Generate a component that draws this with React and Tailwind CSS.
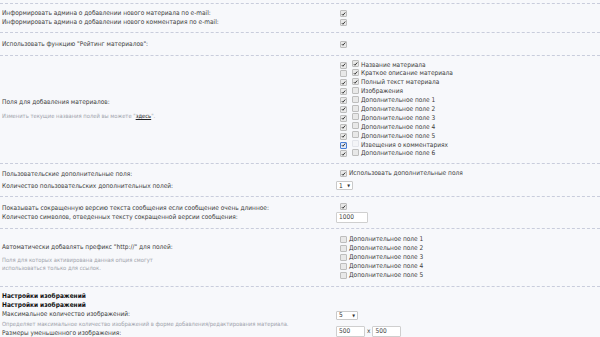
import React from 'react';

const Check = ({ checked = false, focus = false, faint = false }) => (
  <span
    className={`inline-flex h-[7px] w-[7px] shrink-0 items-center justify-center rounded-[1px] border ${
      focus
        ? 'border-[#4a7fd6] bg-[#dfe8f7]'
        : faint
        ? 'border-[#e2e4ea] bg-[#f3f4f7]'
        : 'border-[#bdbdbd] bg-[#e8e8e8]'
    }`}
  >
    {checked && (
      <svg viewBox="0 0 8 8" className="h-[6px] w-[6px]">
        <path d="M1.3 4.2 L3.1 6 L6.8 1.6" fill="none" stroke="#2b2b2b" strokeWidth="1.5" />
      </svg>
    )}
  </span>
);

const Select = ({ value, w }) => (
  <span className={`inline-flex h-[9px] ${w} items-center justify-between rounded-[1px] border border-[#c9c9c9] bg-white px-[2px] text-[6.5px] leading-none text-[#333]`}>
    {value}
    <span className="text-[4px]">▼</span>
  </span>
);

const Field = ({ value, w }) => (
  <span className={`inline-flex h-[11px] ${w} items-center rounded-[1px] border border-[#cfcfcf] bg-white px-[2px] text-[6.5px] leading-none text-[#444]`}>
    {value}
  </span>
);

const Row = ({ h, left, right }) => (
  <div className={`flex ${h} border-b border-dashed border-[#c9cddc]`}>
    <div className="flex w-[336px] flex-col justify-center pl-[2px]">{left}</div>
    <div className="flex flex-col justify-center">{right}</div>
  </div>
);

const fields = [
  [true, true, 'Название материала'],
  [false, true, 'Краткое описание материала'],
  [true, true, 'Полный текст материала'],
  [true, false, 'Изображения'],
  [true, false, 'Дополнительное поле 1'],
  [true, false, 'Дополнительное поле 2'],
  [true, false, 'Дополнительное поле 3'],
  [true, false, 'Дополнительное поле 4'],
  [true, false, 'Дополнительное поле 5'],
  [true, false, 'Извещения о комментариях', true],
  [true, false, 'Дополнительное поле 6'],
];

export default function App() {
  return (
    <div
      className="h-[337px] w-[600px] overflow-hidden bg-[#f7f8fb] text-[6.5px] leading-[9px] text-[#3a3a3a]"
      style={{ fontFamily: '"DejaVu Sans Condensed", "Liberation Sans", sans-serif' }}
    >
      <div className="h-[4px] border-b border-dashed border-[#c9cddc]" />

      <Row
        h="h-[29px]"
        left={
          <>
            <div>Информировать админа о добавлении нового материала по e-mail:</div>
            <div>Информировать админа о добавлении нового комментария по e-mail:</div>
          </>
        }
        right={
          <>
            <div className="flex h-[9px] items-center pl-[4px]"><Check checked /></div>
            <div className="flex h-[9px] items-center pl-[4px]"><Check checked /></div>
          </>
        }
      />

      <Row
        h="h-[23px]"
        left={<div>Использовать функцию "Рейтинг материалов":</div>}
        right={<div className="flex h-[9px] items-center pl-[4px]"><Check checked /></div>}
      />

      <Row
        h="h-[108px]"
        left={
          <>
            <div>Поля для добавления материалов:</div>
            <div className="mt-[5px] text-[5.8px] text-[#a0a3ab]">
              Изменить текущие названия полей вы можете "<span className="text-[#222] underline">здесь</span>".
            </div>
          </>
        }
        right={
          <div className="flex flex-col">
            {fields.map(([a, b, label, focus]) => (
              <div key={label} className="flex h-[8.9px] items-center pl-[4px]">
                <Check checked={a} focus={focus} />
                <span className="ml-[5px]"><Check checked={b} faint={focus} /></span>
                <span className="ml-[2px]">{label}</span>
              </div>
            ))}
          </div>
        }
      />

      <Row
        h="h-[33px]"
        left={
          <>
            <div>Пользовательские дополнительные поля:</div>
            <div className="mt-[3px]">Количество пользовательских дополнительных полей:</div>
          </>
        }
        right={
          <>
            <div className="flex h-[9px] items-center gap-[2px] pl-[4px]">
              <Check checked />
              <span>Использовать дополнительные поля</span>
            </div>
            <div className="mt-[3px]"><Select value="1" w="w-[17px]" /></div>
          </>
        }
      />

      <Row
        h="h-[32px]"
        left={
          <>
            <div>Показывать сокращенную версию текста сообщения если сообщение очень длинное:</div>
            <div>Количество символов, отведенных тексту сокращенной версии сообщения:</div>
          </>
        }
        right={
          <>
            <div className="flex h-[8px] items-center pl-[4px]"><Check checked /></div>
            <div className="mt-[1px]"><Field value="1000" w="w-[32px]" /></div>
          </>
        }
      />

      <Row
        h="h-[58px]"
        left={
          <>
            <div>Автоматически добавлять префикс "http://" для полей:</div>
            <div className="mt-[4px] text-[5.8px] leading-[8px] text-[#a0a3ab]">
              Поля для которых активирована данная опция смогут
              <br />
              использоваться только для ссылок.
            </div>
          </>
        }
        right={
          <div className="flex flex-col">
            {[1, 2, 3, 4, 5].map((n) => (
              <div key={n} className="flex h-[9.2px] items-center gap-[2px] pl-[4px]">
                <Check />
                <span>Дополнительное поле {n}</span>
              </div>
            ))}
          </div>
        }
      />

      <div className="flex pt-[5px]">
        <div className="flex w-[336px] flex-col pl-[2px]">
          <div className="font-bold text-[#111]">Настройки изображений</div>
          <div className="font-bold text-[#111]">Настройки изображений</div>
          <div>Максимальное количество изображений:</div>
          <div className="text-[5.8px] leading-[10px] text-[#a0a3ab]">Определяет максимальное количество изображений в форме добавления/редактирования материала.</div>
          <div>Размеры уменьшенного изображения:</div>
        </div>
        <div className="flex flex-col pt-[19px]">
          <Select value="5" w="w-[22px]" />
          <div className="mt-[6px] flex items-center gap-[2px]">
            <Field value="500" w="w-[29px]" />
            <span>x</span>
            <Field value="500" w="w-[29px]" />
          </div>
        </div>
      </div>
    </div>
  );
}
